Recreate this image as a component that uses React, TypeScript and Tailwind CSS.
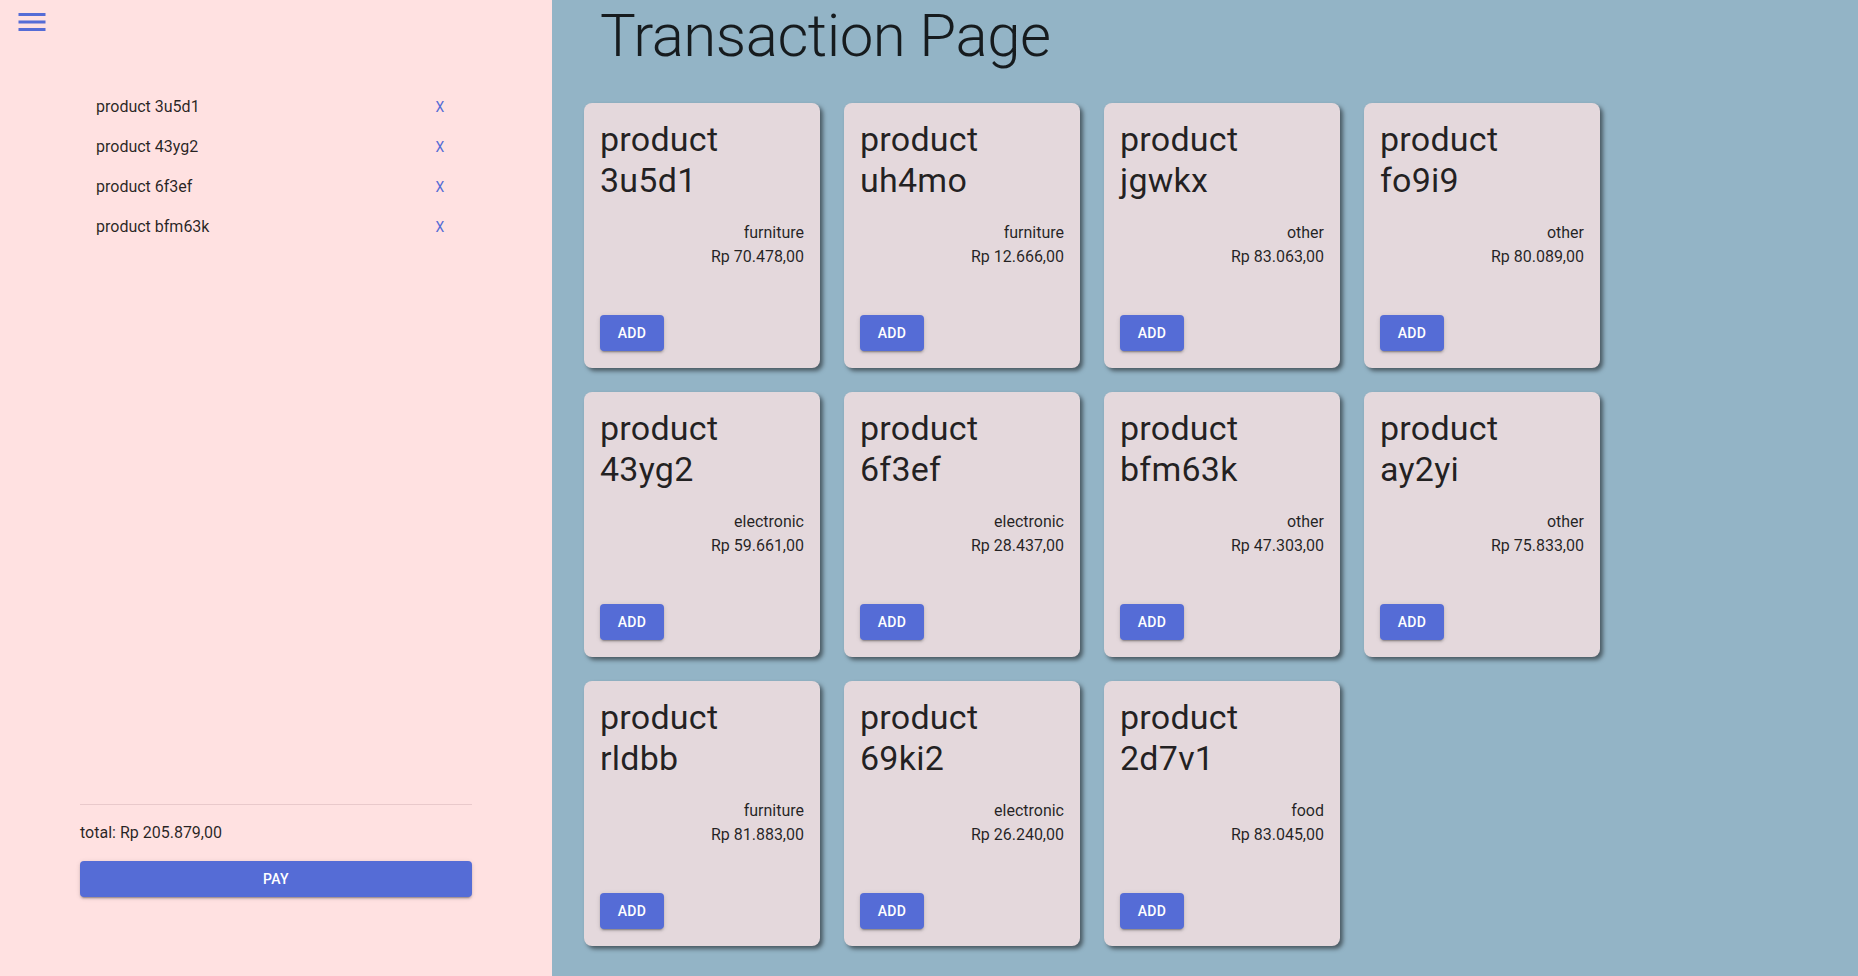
import React from 'react';

type Product = { id: string; category: string; price: string };

const products: Product[] = [
  { id: '3u5d1', category: 'furniture', price: 'Rp 70.478,00' },
  { id: 'uh4mo', category: 'furniture', price: 'Rp 12.666,00' },
  { id: 'jgwkx', category: 'other', price: 'Rp 83.063,00' },
  { id: 'fo9i9', category: 'other', price: 'Rp 80.089,00' },
  { id: '43yg2', category: 'electronic', price: 'Rp 59.661,00' },
  { id: '6f3ef', category: 'electronic', price: 'Rp 28.437,00' },
  { id: 'bfm63k', category: 'other', price: 'Rp 47.303,00' },
  { id: 'ay2yi', category: 'other', price: 'Rp 75.833,00' },
  { id: 'rldbb', category: 'furniture', price: 'Rp 81.883,00' },
  { id: '69ki2', category: 'electronic', price: 'Rp 26.240,00' },
  { id: '2d7v1', category: 'food', price: 'Rp 83.045,00' },
];

const cart = ['3u5d1', '43yg2', '6f3ef', 'bfm63k'];

const MenuIcon = () => (
  <svg viewBox="0 0 24 24" className="h-9 w-9 fill-[#556cd6]">
    <path d="M3 18h18v-2H3v2zm0-5h18v-2H3v2zm0-7v2h18V6H3z" />
  </svg>
);

const Sidebar = () => (
  <aside className="flex w-[552px] shrink-0 flex-col bg-[#ffe1e1]">
    <div className="pl-[14px] pt-[4px]">
      <MenuIcon />
    </div>

    <ul className="mt-[47px] px-20">
      {cart.map((id) => (
        <li key={id} className="flex h-10 items-center justify-between pl-4">
          <span className="text-base text-black/85">product {id}</span>
          <button className="flex h-9 w-16 items-center justify-center text-sm text-[#556cd6]">
            X
          </button>
        </li>
      ))}
    </ul>

    <div className="mt-auto px-20 pb-[79px]">
      <div className="h-px bg-[#e9c9cb]" />
      <p className="mt-4 text-base leading-6 text-black/85">total: Rp 205.879,00</p>
      <button className="mt-4 h-9 w-full rounded bg-[#556cd6] text-sm font-medium tracking-wide text-white shadow-[0_3px_1px_-2px_rgba(0,0,0,0.2),0_2px_2px_0_rgba(0,0,0,0.14),0_1px_5px_0_rgba(0,0,0,0.12)]">
        PAY
      </button>
    </div>
  </aside>
);

const ProductCard = ({ product }: { product: Product }) => (
  <div className="flex h-[265px] w-[236px] flex-col rounded-lg bg-[#e4d8dc] px-4 pt-4 pb-[17px] shadow-[3px_3px_4px_rgba(0,0,0,0.5)]">
    <h4 className="w-min text-[34px] leading-[41px] tracking-[0.00735em] text-black/85">
      product {product.id}
    </h4>
    <div className="mt-5 text-right text-base leading-6 text-black/85">
      <div>{product.category}</div>
      <div>{product.price}</div>
    </div>
    <button className="mt-auto h-9 w-16 rounded bg-[#556cd6] text-sm font-medium tracking-wide text-white shadow-[0_3px_1px_-2px_rgba(0,0,0,0.2),0_2px_2px_0_rgba(0,0,0,0.14),0_1px_5px_0_rgba(0,0,0,0.12)]">
      ADD
    </button>
  </div>
);

export default function App() {
  return (
    <div className="flex min-h-screen font-['Roboto',sans-serif]">
      <Sidebar />
      <main className="flex-1 bg-[#93b4c6] px-8">
        <h2 className="pl-4 text-[60px] font-light leading-[72px] tracking-[-0.00833em] text-black/85">
          Transaction Page
        </h2>
        <div className="mt-[31px] grid grid-cols-[repeat(4,236px)] gap-6 pb-[30px]">
          {products.map((p) => (
            <ProductCard key={p.id} product={p} />
          ))}
        </div>
      </main>
    </div>
  );
}
